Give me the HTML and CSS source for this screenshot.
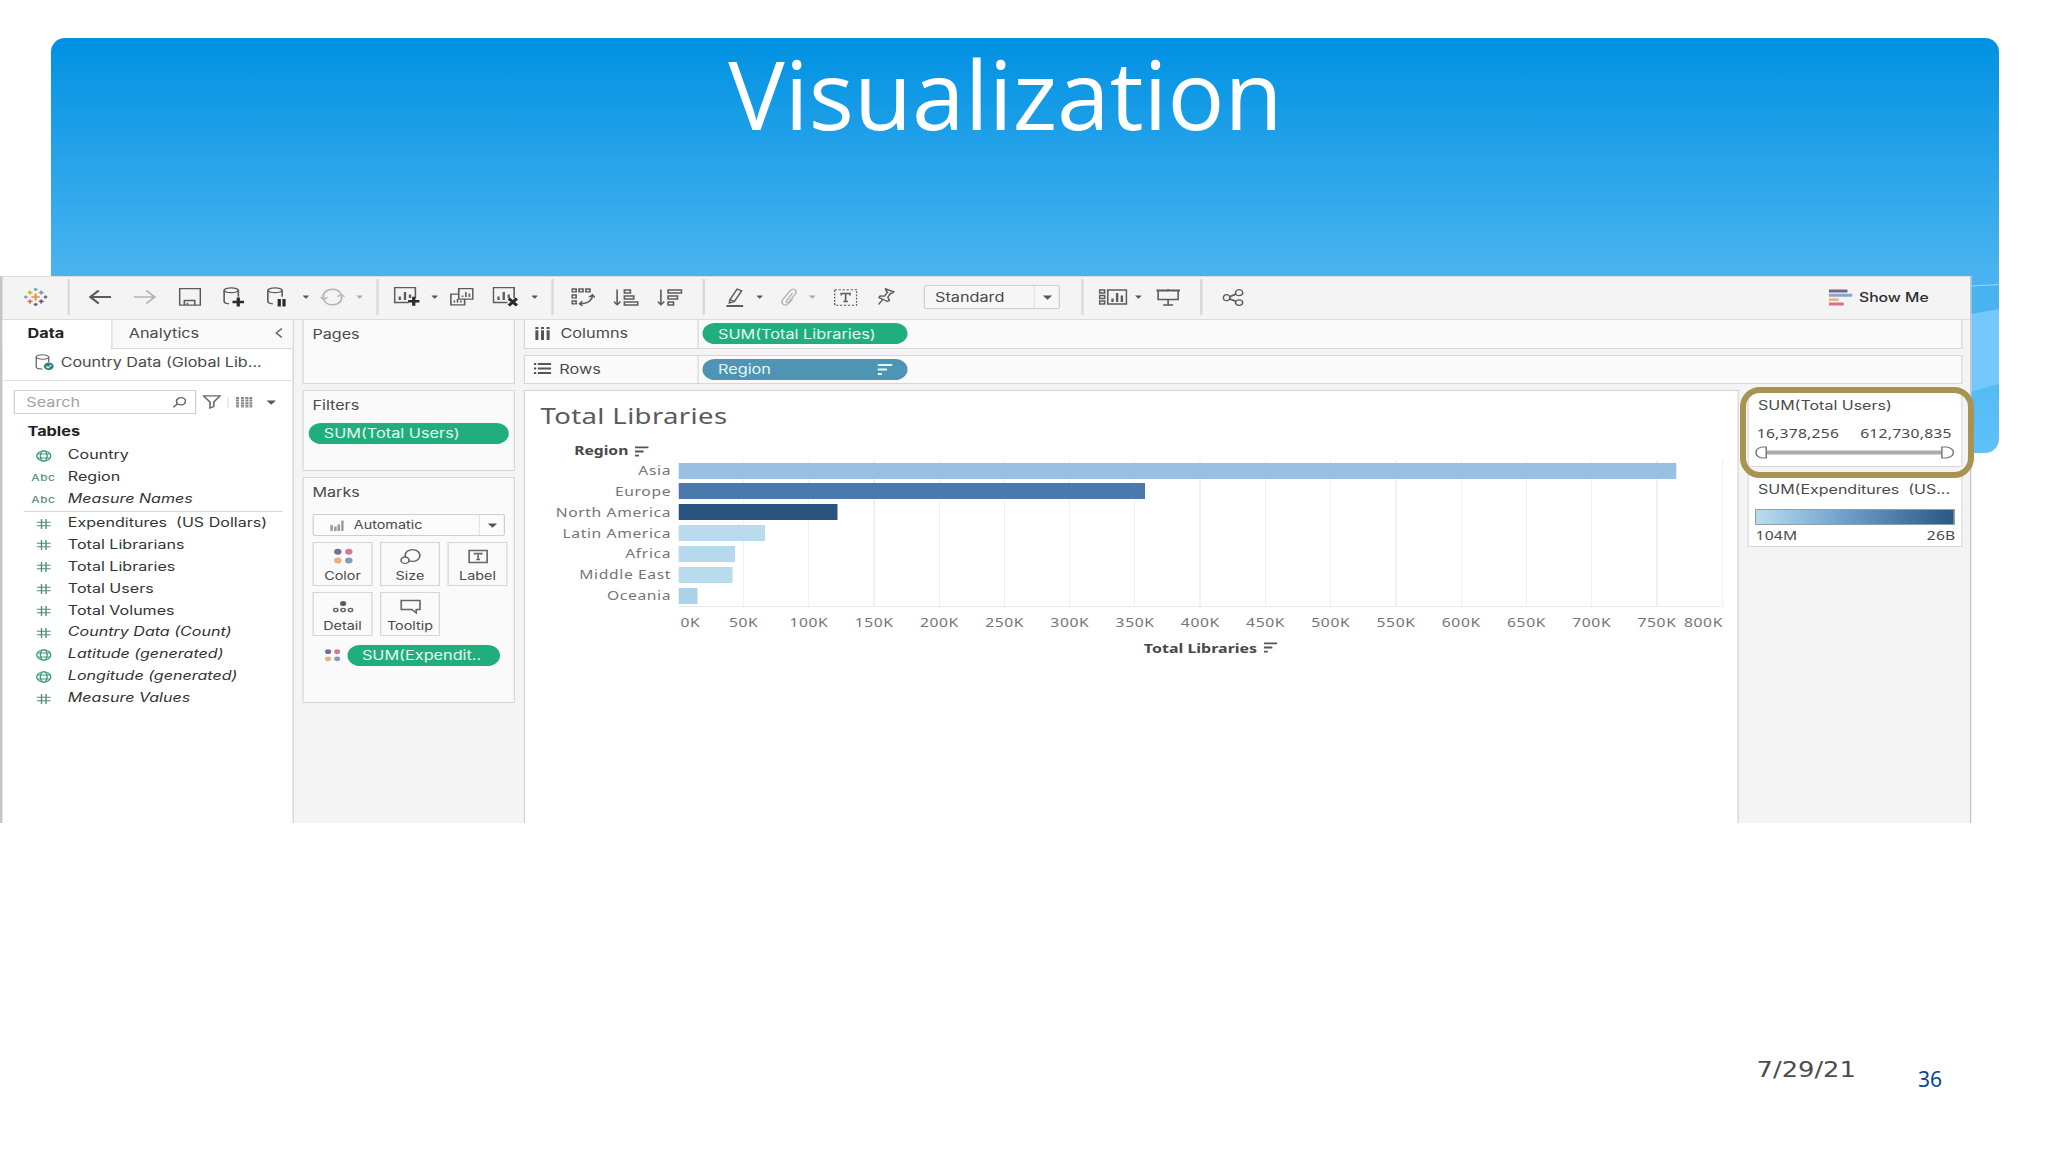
FILE: index.html
```html
<!DOCTYPE html>
<html lang="en">
<head>
    <meta charset="UTF-8">
    <meta name="viewport" content="width=device-width, initial-scale=1.0">
    <title>Visualization</title>
    <link rel="stylesheet" href="styles.css">
</head>
<body>
    <svg class="sprite" width="0" height="0">
        <symbol id="globe" viewBox="0 0 13 12">
            <g fill="none" stroke="#3f9a7c" stroke-width="1.1">
                <ellipse cx="6.5" cy="6" rx="5.6" ry="5.2"/>
                <ellipse cx="6.5" cy="6" rx="2.7" ry="5.2"/>
                <path d="M1.4 4h10.2M1.4 8h10.2"/>
            </g>
        </symbol>
        <symbol id="hash" viewBox="0 0 13 12">
            <path d="M4.7 1v10M8.3 1v10M1 4.2h11M1 7.8h11" fill="none" stroke="#4f8d78" stroke-width="1.1"/>
        </symbol>
        <symbol id="caret" viewBox="0 0 6 4">
            <path d="M0 0.4h6L3 3.8z" fill="currentColor"/>
        </symbol>
        <symbol id="sort" viewBox="0 0 12 11">
            <path d="M0 1h12M0 5.5h7.5M0 10h3.5" fill="none" stroke="currentColor" stroke-width="2"/>
        </symbol>
        <symbol id="dots" viewBox="0 0 16 16">
            <circle cx="4" cy="3.6" r="2.8" fill="#756f98"/>
            <circle cx="12.3" cy="3.6" r="2.8" fill="#d9779a"/>
            <circle cx="4" cy="11.8" r="2.8" fill="#eeac78"/>
            <circle cx="12.3" cy="11.8" r="2.8" fill="#7f9fb8"/>
        </symbol>
    </svg>

    <div class="slide">
        <div class="banner">
            <svg class="waves" viewBox="0 0 28 190" preserveAspectRatio="none">
                <path d="M0 40L28 35V110L0 118z" fill="#74c8fa"/>
                <path d="M0 12L28 10.5" stroke="#9ad8fb" stroke-width="1"/>
            </svg>
        </div>

        <h1>Visualization</h1>

        <!-- Tableau window -->
        <div class="app">
            <div class="toolbar">
                <div class="group logo">
                    <svg width="19" height="18" viewBox="0 0 19 18" fill="none" stroke-width="1.4">
                        <path d="M9.5 5.5v7M6.2 9h6.6" stroke="#e8923c" stroke-width="1.7"/>
                        <path d="M5 2.6v4M3 4.6h4" stroke="#d9a63c"/>
                        <path d="M14 2.6v4M12 4.6h4" stroke="#6f94a8"/>
                        <path d="M5 11.4v4M3 13.4h4" stroke="#d3695a"/>
                        <path d="M14 11.4v4M12 13.4h4" stroke="#4d5586"/>
                        <path d="M9.5 0v3M8 1.5h3M1.6 7.6v3M0.2 9h3" stroke="#7fa3ae"/>
                        <path d="M17.4 7.6v3M16 9h3M9.5 15v3M8 16.5h3" stroke="#5b6290"/>
                    </svg>
                </div>
                <div class="group nav">
                    <span class="tool"><svg width="18" height="16" viewBox="0 0 18 16"><path d="M18 8H1.5M8 1.5L1.2 8L8 14.5" stroke-width="1.9"/></svg></span>
                    <span class="tool off fwd"><svg width="18" height="16" viewBox="0 0 18 16"><path d="M0 8h16.5M10 1.5L16.8 8L10 14.5" stroke-width="1.7"/></svg></span>
                    <span class="tool"><svg width="18" height="18" viewBox="0 0 18 18"><path d="M0.7 0.7h16.6v16.4H0.7zM4.5 17v-4.5h8.3V17M7 17v-2.3"/></svg></span>
                    <span class="tool"><svg width="18" height="20" viewBox="0 0 18 20"><ellipse cx="7" cy="3.3" rx="5.7" ry="2.4"/><path d="M1.3 3.3v11.2c0 1.2 1.6 2 4 2.4M12.7 3.3v6.5"/><path d="M12.6 10.5v9M8 15h9.2" class="heavy"/></svg></span>
                    <span class="tool"><svg width="18" height="20" viewBox="0 0 18 20"><ellipse cx="7" cy="3.3" rx="5.7" ry="2.4"/><path d="M1.3 3.3v11.2c0 1.2 1.6 2 4 2.4M12.7 3.3v6.5"/><path d="M10.4 12v7.5M14.2 12v7.5" class="heavy"/></svg></span>
                    <svg class="caret"><use href="#caret"/></svg>
                    <span class="tool off refresh"><svg width="20" height="18" viewBox="0 0 20 18"><path d="M3 10.5C1.5 5.5 5 1.2 10 1.2c3.2 0 5.5 1.8 6.7 4.3M17 7.5c1.5 5-2 9.3-7 9.3-3.2 0-5.5-1.8-6.7-4.3" stroke-width="1.4"/><path d="M0.5 9l2.6 2.8L6 9.2M14 8.7l3-2.6 2.6 2.8" stroke-width="1.2"/></svg></span>
                    <svg class="caret off"><use href="#caret"/></svg>
                </div>
                <div class="group sheets">
                    <span class="tool"><svg width="21" height="20" viewBox="0 0 21 20"><path d="M12 15.5H0.7V0.7h16.6v10.5"/><path d="M4.8 13V9.5M9 13V5M13 11V7.5" stroke-width="1.9"/><path d="M16 9.8v9M11.5 14.2h9" class="heavy"/></svg></span>
                    <svg class="caret"><use href="#caret"/></svg>
                    <span class="tool"><svg width="19" height="18" viewBox="0 0 19 18"><path d="M7 0.7h11.3v10.5H7zM7 6.2H0.7v10.6h11v-5.6"/><path d="M10 9V7.5M12.7 9V4M15.5 9V5.5M3.5 14.5V12.5M6 14.5V11M8.7 14.5V12.5"/></svg></span>
                    <span class="tool"><svg width="21" height="20" viewBox="0 0 21 20"><path d="M12 15.5H0.7V0.7h16.6v10.5"/><path d="M4.8 13V9.5M9 13V5M13 11V7.5" stroke-width="1.9"/><path d="M13 11.5l6.5 7M19.5 11.5l-6.5 7" class="heavy"/></svg></span>
                    <svg class="caret"><use href="#caret"/></svg>
                </div>
                <div class="group sorts">
                    <span class="tool"><svg width="19" height="18" viewBox="0 0 19 18"><path d="M0.7 1h3.2v2.8H0.7zM6.2 1h3.2v2.8H6.2zM11.7 1h3.2v2.8h-3.2zM0.7 7h3.2v2.8H0.7zM0.7 13h3.2v2.8H0.7z"/><path d="M17 7c0 5-3.5 8.5-10 8.8M14.3 9.3L17 6.7l2 2.8M9 13.3l-2.5 2.5L9 18"/></svg></span>
                    <span class="tool"><svg width="20" height="17" viewBox="0 0 20 17"><path d="M2.7 0.5V15M0 12.5l2.7 3.3 2.7-3.3"/><path d="M8.5 1h4.8v3H8.5zM8.5 7h7.5v3H8.5zM8.5 13h10.8v3H8.5z"/></svg></span>
                    <span class="tool"><svg width="20" height="17" viewBox="0 0 20 17"><path d="M2.7 0.5V15M0 12.5l2.7 3.3 2.7-3.3"/><path d="M8.5 1h10.8v3H8.5zM8.5 7h7.5v3H8.5zM8.5 13h4.3v3H8.5z"/></svg></span>
                </div>
                <div class="group format">
                    <span class="tool"><svg width="14" height="19" viewBox="0 0 14 19"><path d="M3 11.5L8.7 1l3.6 1.8L6.5 13.5 2.5 15zM3 11.5l3.5 2"/><path d="M0 18h13.5" stroke-width="2"/></svg></span>
                    <svg class="caret"><use href="#caret"/></svg>
                    <span class="tool off"><svg width="14" height="18" viewBox="0 0 14 18"><path d="M10 5L5.3 12.8c-1 1.8 1 2.7 2 1L12.5 5.5C14 2 10.5-0.5 8 2.8L2 12c-2 4 2.5 7 5 3.5l3-4.5" stroke-width="1.2"/></svg></span>
                    <svg class="caret off"><use href="#caret"/></svg>
                    <span class="tool gap"><svg width="19" height="17" viewBox="0 0 19 17"><path d="M0.7 0.7h17.6v15.6H0.7z" stroke-dasharray="1.8 1.4" stroke-width="1.1"/><path d="M6 6.5V4.5h7v2M9.5 4.5v8M7.7 12.5h3.6"/></svg></span>
                    <span class="tool"><svg width="14" height="18" viewBox="0 0 14 18"><path d="M6.5 0.8l6.5 3-1.3 1.5-1.2-0.2-2.2 4.2 1.2 3.2-1.5 1L1.2 9.5l1-1.5 3.5 0.2L8 4 7 3zM4.2 11.5L0.8 16.5"/></svg></span>
                    <div class="select fit"><span>Standard</span><i><svg class="caret"><use href="#caret"/></svg></i></div>
                </div>
                <div class="group views">
                    <span class="tool"><svg width="23" height="16" viewBox="0 0 23 16"><path d="M0.7 1h4v3h-4zM0.7 6.5h4v3h-4zM0.7 12h4v3h-4zM7.2 1h15v14h-15z"/><path d="M11 13V9.5M14.7 13V4M18.5 13V6.5" stroke-width="1.9"/></svg></span>
                    <svg class="caret"><use href="#caret"/></svg>
                    <span class="tool"><svg width="19" height="17" viewBox="0 0 19 17"><path d="M0 1.5h19" stroke-width="2"/><path d="M1.5 2v8.5h16V2M9.5 10.5V16M5.5 16h8M9.5 0v1"/></svg></span>
                </div>
                <div class="group share">
                    <span class="tool"><svg width="17" height="17" viewBox="0 0 17 17"><ellipse cx="3.3" cy="8.7" rx="2.7" ry="3"/><ellipse cx="13.3" cy="3.7" rx="2.9" ry="3"/><ellipse cx="13.3" cy="13.6" rx="2.9" ry="2.8"/><path d="M6 7.5l4.6-2.3M6 10l4.6 2.3" stroke-width="1.6"/></svg></span>
                </div>
                <div class="show-me">
                    <svg width="19" height="17" viewBox="0 0 19 17">
                        <path d="M0 2h15" stroke="#6f6685" stroke-width="3"/>
                        <path d="M0 6.2h19" stroke="#86a5cd" stroke-width="3"/>
                        <path d="M0 10.6h8" stroke="#eeb48c" stroke-width="2.8"/>
                        <path d="M0 15h12" stroke="#dc7385" stroke-width="3"/>
                    </svg>
                    <span>Show Me</span>
                </div>
            </div>

            <div class="workspace">
                <!-- Data pane -->
                <div class="data-pane">
                    <div class="tabs">
                        <div class="tab active">Data</div>
                        <div class="tab"><span>Analytics</span><svg width="6" height="10" viewBox="0 0 6 10"><path d="M5.5 0.5L1 5l4.5 4.5"/></svg></div>
                    </div>
                    <div class="source">
                        <svg width="16" height="17" viewBox="0 0 16 17"><g fill="none" stroke="#6d6d6d" stroke-width="1.1"><ellipse cx="6" cy="3" rx="5" ry="2.2"/><path d="M1 3v10c0 1.2 2 2 5 2M11 3v5"/></g><circle cx="11" cy="12.3" r="3.9" fill="#2f8284"/><path d="M9 12.3l1.5 1.5 2.6-2.8" stroke="#fff" fill="none"/></svg>
                        <span>Country Data (Global Lib...</span>
                    </div>
                    <div class="search-row">
                        <div class="search"><span>Search</span><svg width="11" height="11" viewBox="0 0 11 11"><circle cx="6.8" cy="4.3" r="3.6"/><path d="M4.2 6.8L0.5 10.3"/></svg></div>
                        <svg class="funnel" width="15" height="14" viewBox="0 0 15 14"><path d="M0.8 0.8h13.2L9 7v4.5L6 13V7z"/></svg>
                        <svg class="grid" width="14" height="11" viewBox="0 0 14 11"><path d="M2 0v11M6 0v11M9.5 0v11M12.8 0v11" stroke-dasharray="2 0.6"/></svg>
                        <svg class="caret big"><use href="#caret"/></svg>
                    </div>
                    <div class="tables-title">Tables</div>
                    <ul class="fields">
                        <li><svg><use href="#globe"/></svg>Country</li>
                        <li><b>Abc</b>Region</li>
                        <li class="calc"><b>Abc</b>Measure Names</li>
                    </ul>
                    <ul class="fields measures">
                        <li><svg><use href="#hash"/></svg>Expenditures  (US Dollars)</li>
                        <li><svg><use href="#hash"/></svg>Total Librarians</li>
                        <li><svg><use href="#hash"/></svg>Total Libraries</li>
                        <li><svg><use href="#hash"/></svg>Total Users</li>
                        <li><svg><use href="#hash"/></svg>Total Volumes</li>
                        <li class="calc"><svg><use href="#hash"/></svg>Country Data (Count)</li>
                        <li class="calc"><svg><use href="#globe"/></svg>Latitude (generated)</li>
                        <li class="calc"><svg><use href="#globe"/></svg>Longitude (generated)</li>
                        <li class="calc"><svg><use href="#hash"/></svg>Measure Values</li>
                    </ul>
                </div>

                <!-- Pages / Filters / Marks -->
                <div class="cards">
                    <div class="card pages"><h3>Pages</h3></div>
                    <div class="card filters">
                        <h3>Filters</h3>
                        <div class="pill green">SUM(Total Users)</div>
                    </div>
                    <div class="card marks">
                        <h3>Marks</h3>
                        <div class="select mark-type">
                            <svg width="11" height="11" viewBox="0 0 11 11"><path d="M1.3 11V5M4.3 11V6.5M7 11V4.5M10 11V0.5" stroke="#999" stroke-width="2"/></svg>
                            <span>Automatic</span><i><svg class="caret big"><use href="#caret"/></svg></i>
                        </div>
                        <div class="mark-grid">
                            <div class="mark"><svg class="plain" width="17" height="17"><use href="#dots"/></svg>Color</div>
                            <div class="mark"><svg width="17" height="17" viewBox="0 0 17 17"><circle cx="10" cy="7.5" r="5.9"/><circle cx="4" cy="12.2" r="3.2" fill="#fafafa"/></svg>Size</div>
                            <div class="mark"><svg width="17" height="17" viewBox="0 0 17 17"><path d="M1.3 2.5h14.4v12H1.3zM5.7 6.7V5.5h5.6v1.2M8.5 5.5V11.5M7 11.5h3"/></svg>Label</div>
                            <div class="mark"><svg width="17" height="17" viewBox="0 0 17 17"><circle cx="8.5" cy="5.5" r="1.9" fill="#555"/><circle cx="2.6" cy="12" r="1.7"/><circle cx="8.5" cy="12" r="1.7"/><circle cx="14.4" cy="12" r="1.7"/></svg>Detail</div>
                            <div class="mark"><svg width="17" height="17" viewBox="0 0 17 17"><path d="M1 2.5h15v9h-3V15L9.5 11.5H1z"/></svg>Tooltip</div>
                        </div>
                        <div class="encoding">
                            <svg width="14" height="15"><use href="#dots"/></svg>
                            <div class="pill green">SUM(Expendit..</div>
                        </div>
                    </div>
                </div>

                <div class="main">
                    <div class="shelf">
                        <div class="shelf-name">
                            <svg width="12" height="13" viewBox="0 0 12 13"><path d="M1.5 0v2M6 0v2M10.5 0v2M1.5 3.2V13M6 3.2V13M10.5 3.2V13" stroke-width="2.4"/></svg>
                            Columns
                        </div>
                        <div class="pill green">SUM(Total Libraries)</div>
                    </div>
                    <div class="shelf">
                        <div class="shelf-name rows">
                            <svg width="14" height="11" viewBox="0 0 14 11"><path d="M0 1h2M3.3 1H14M0 5.5h2M3.3 5.5H14M0 10h2M3.3 10H14" stroke-width="1.9"/></svg>
                            Rows
                        </div>
                        <div class="pill blue">Region<svg width="12" height="11"><use href="#sort"/></svg></div>
                    </div>

                    <div class="view-row">
                        <div class="view">
                            <h2>Total Libraries</h2>
                            <div class="row-header">Region <svg width="11" height="11"><use href="#sort"/></svg></div>
                            <div class="chart">
                                <div class="row-labels">
                                    <span>Asia</span>
                                    <span>Europe</span>
                                    <span>North America</span>
                                    <span>Latin America</span>
                                    <span>Africa</span>
                                    <span>Middle East</span>
                                    <span>Oceania</span>
                                </div>
                                <div class="plot">
                                    <div class="bar" style="width: 95.5%; background: #97c0e3"></div>
                                    <div class="bar" style="width: 44.6%; background: #4a7aab"></div>
                                    <div class="bar" style="width: 15.2%; background: #29547f"></div>
                                    <div class="bar" style="width: 8.3%; background: #b9dbed"></div>
                                    <div class="bar" style="width: 5.35%; background: #b6d9ee"></div>
                                    <div class="bar" style="width: 5.1%; background: #b9dced"></div>
                                    <div class="bar" style="width: 1.75%; background: #acd2e8"></div>
                                </div>
                            </div>
                            <div class="axis">
                                <span>0K</span><span>50K</span><span>100K</span><span>150K</span><span>200K</span><span>250K</span><span>300K</span><span>350K</span><span>400K</span><span>450K</span><span>500K</span><span>550K</span><span>600K</span><span>650K</span><span>700K</span><span>750K</span><span>800K</span>
                            </div>
                            <div class="axis-title">Total Libraries <svg width="11" height="11"><use href="#sort"/></svg></div>
                        </div>

                        <div class="legends">
                            <div class="legend range">
                                <h4>SUM(Total Users)</h4>
                                <div class="ends"><span>16,378,256</span><span>612,730,835</span></div>
                                <svg width="160" height="13" viewBox="0 0 160 13"><path d="M9 6.5h140" stroke="#ababab" stroke-width="4"/><path d="M9 1v11H5.5C2 11 0.8 8.5 0.8 6.5S2 2 5.5 1zM149.500 1v11h4c3.5-1 5.2-3.5 5.2-5.5s-1.7-4.5-5.2-5.5z" fill="#fff" stroke="#777" stroke-width="1.2"/></svg>
                            </div>
                            <div class="legend ramp">
                                <h4>SUM(Expenditures  (US...</h4>
                                <div class="gradient"></div>
                                <div class="ends"><span>104M</span><span>26B</span></div>
                            </div>
                        </div>
                    </div>
                </div>
            </div>
        </div>

        <div class="highlight"></div>

        <div class="footer">
            <span class="date">7/29/21</span>
            <span class="page">36</span>
        </div>
    </div>
</body>
</html>
```
FILE: styles.css
```css
* {
    box-sizing: border-box;
}

body {
    margin: 0;
    background: #fff;
    font-family: Inter, "Noto Sans", sans-serif;
}

.sprite {
    position: absolute;
}

.slide {
    position: relative;
    width: 2048px;
    height: 1152px;
    overflow: hidden;
}

/* blue header shape behind everything */
.banner {
    position: absolute;
    left: 51px;
    top: 38px;
    width: 1948px;
    height: 415px;
    border-radius: 14px;
    background: linear-gradient(#0091e2 0%, #4ab4f0 57%, #49b3f1 66%, #5fc2f9 100%);
    overflow: hidden;
}

.waves {
    position: absolute;
    right: 0;
    top: 236px;
    width: 28px;
    height: 190px;
}

h1 {
    position: relative;
    margin: 0;
    height: 276px;
    padding: 30px 37px 0 0;
    font: 400 94.8px/128px "Open Sans", sans-serif;
    color: #fff;
    text-align: center;
}

/* the window is stretched sideways to fill the slide */
.app {
    position: relative;
    width: 1577px;
    height: 547px;
    transform: scaleX(1.25);
    transform-origin: 0 0;
    background: #f4f4f4;
    border: solid #c6c6c6;
    border-width: 1px 1px 0 2px;
    border-top-color: #dcdcdc;
    color: #4a4a4a;
    overflow: hidden;
    font-size: 13px;
}

.app svg {
    flex: none;
}

/* Toolbar */
.toolbar {
    display: flex;
    height: 42px;
    padding: 2px 33px 4px 0;
}

.group {
    display: flex;
    align-items: center;
    border-right: 2px solid #dadada;
}

.logo {
    width: 54px;
    padding-left: 16.5px;
}

.nav {
    width: 246.5px;
    padding-left: 6px;
}

.sheets {
    width: 140px;
    padding-left: 5px;
}

.sorts {
    width: 121.5px;
    padding-left: 6px;
}

.format {
    width: 302.5px;
    padding-left: 7.5px;
}

.views {
    width: 95px;
    padding-left: 6px;
}

.share {
    border: 0;
    padding-left: 7px;
}

.tool {
    width: 35.2px;
    display: flex;
    justify-content: center;
}

.tool.fwd {
    width: 37px;
}

.tool.refresh {
    width: 33.4px;
}

.format .tool {
    width: 33px;
}

.format .gap {
    margin-left: 3px;
}

.tool svg {
    fill: none;
    stroke: #5c5c5c;
    stroke-width: 1.3;
}

.tool.off svg {
    stroke: #b3b3b3;
}

.tool .heavy {
    stroke: #2b2b2b;
    stroke-width: 2.6;
}

.caret {
    width: 5.5px;
    height: 4px;
    margin: 0 2px;
    color: #555;
}

.format > .caret,
.views > .caret {
    margin: 0 4px 0 0;
}

.caret.off {
    color: #aaa;
}

.caret.big {
    width: 8px;
    height: 5px;
    margin: 0;
}

.select {
    display: flex;
    align-items: center;
    background: #fbfbfb;
    border: 1px solid #cfcfcf;
    border-radius: 2px;
}

.select span {
    flex: 1;
}

.select i {
    align-self: stretch;
    display: flex;
    align-items: center;
    justify-content: center;
    width: 20px;
    border-left: 1px solid #e4e4e4;
}

.fit {
    width: 109px;
    height: 24px;
    margin-left: 13.5px;
    padding-left: 8px;
    background: #f7f7f7;
}

.fit .caret {
    width: 8px;
    height: 5px;
    margin: 0;
}

.show-me {
    margin-left: auto;
    display: flex;
    align-items: center;
    gap: 5px;
    color: #2e2e2e;
    font-size: 12.6px;
    font-weight: 500;
}

/* Columns of the workspace */
.workspace {
    display: grid;
    grid-template-columns: 233px 170.4px 1fr;
    column-gap: 7px;
    height: 504px;
    padding-right: 8px;
    border-top: 1px solid #dcdcdc;
}

.data-pane {
    background: #fff;
    border-right: 1px solid #cfcfcf;
}

.tabs {
    display: flex;
    height: 29px;
}

.tab {
    display: flex;
    align-items: center;
    justify-content: space-between;
    flex: 1;
    padding: 0 8px 3px 13px;
    background: #f9f9f9;
    border: solid #d9d9d9;
    border-width: 0 0 1px 1px;
}

.tab.active {
    flex: none;
    width: 87px;
    padding-left: 20px;
    background: #fff;
    border: 0;
    color: #222;
    font-weight: 700;
}

.tab svg,
.funnel,
.grid,
.search svg,
.mark svg {
    fill: none;
    stroke: #666;
    stroke-width: 1.3;
}

.source {
    display: flex;
    align-items: center;
    gap: 5px;
    height: 32px;
    padding: 0 0 4px 25.5px;
    border-bottom: 1px solid #e2e2e2;
    font-size: 12.9px;
    white-space: nowrap;
}

.search-row {
    display: flex;
    align-items: center;
    padding: 9px 0 0 9px;
}

.search {
    display: flex;
    align-items: center;
    justify-content: space-between;
    width: 146px;
    height: 24px;
    padding: 0 7px 0 9px;
    border: 1px solid #d0d0d0;
    color: #a3a3a3;
}

.funnel {
    margin-left: 5px;
}

.grid {
    box-sizing: content-box;
    margin: 0 11px 0 5px;
    padding-left: 5px;
    border-left: 1px solid #e0e0e0;
}

.grid path {
    stroke: #888;
    stroke-width: 2.5;
}

.tables-title {
    padding: 9px 0 0 20px;
    height: 30px;
    color: #222;
    font-weight: 700;
}

.fields {
    list-style: none;
    margin: 0;
    padding: 0;
    color: #333;
    font-size: 12.85px;
}

.fields li {
    display: flex;
    align-items: center;
    height: 21.88px;
    padding-left: 23px;
    white-space: pre;
}

.fields svg {
    width: 16px;
    height: 12px;
    margin: 2px 11.5px 0 1.8px;
}

.fields b {
    width: 29.3px;
    padding-top: 1px;
    color: #5e8f80;
    font-size: 9.5px;
    font-style: normal;
    font-weight: 500;
    letter-spacing: 0.4px;
}

.fields .calc {
    font-style: italic;
}

.measures {
    padding-top: 2px;
}

.measures::before {
    content: "";
    display: block;
    height: 1px;
    margin: -1px 8px 0 17px;
    background: #d6d6d6;
}

/* Cards */
.card {
    margin-bottom: 6px;
    padding: 0 6px;
    background: #fafafa;
    border: 1px solid #d8d8d8;
}

.card h3 {
    margin: 0;
    padding-left: 1px;
    font-size: 12.9px;
    font-weight: 400;
    line-height: 16px;
}

.pages {
    height: 64px;
    padding-top: 7px;
    border-top: 0;
}

.filters {
    height: 81px;
    padding: 7px 4px;
}

.filters h3 {
    padding-left: 3px;
}

.marks {
    height: 226px;
    padding-top: 7px;
}

.pill {
    height: 21px;
    padding: 0 12px;
    border-radius: 10px / 10.5px;
    line-height: 20px;
    color: #e8f7f0;
    white-space: nowrap;
}

.green {
    background: #20ae7d;
}

.blue {
    background: #4d94b5;
}

.filters .pill {
    margin-top: 9px;
}

.mark-type {
    height: 22px;
    margin: 13px 1px 6px 1px;
    padding-left: 13px;
    gap: 8px;
    font-size: 11.5px;
}

.mark-grid {
    display: grid;
    grid-template-columns: 48px 48px 48px;
    gap: 6px;
    justify-content: space-between;
    margin: 0 1.5px 9px 1px;
}

.mark {
    display: flex;
    flex-direction: column;
    align-items: center;
    height: 44px;
    padding-top: 5px;
    border: 1px solid #d6d6d6;
    font-size: 11.5px;
    line-height: 18px;
}

.mark svg {
    margin-bottom: 2px;
}

.mark .plain {
    stroke: none;
}

.encoding {
    display: flex;
    align-items: center;
    gap: 5px;
    padding: 0 5px 0 9.5px;
}

.encoding .pill {
    flex: 1;
}

/* Shelves and view */
.main {
    display: flex;
    flex-direction: column;
}

.shelf {
    display: flex;
    align-items: center;
    height: 29px;
    margin-bottom: 6px;
    padding-bottom: 1px;
    background: #fafafa;
    border: 1px solid #d8d8d8;
}

.shelf:first-child {
    border-top: 0;
}

.shelf-name {
    display: flex;
    align-items: center;
    gap: 8px;
    width: 139px;
    align-self: stretch;
    margin-bottom: -1px;
    padding: 0 0 2px 8px;
    border-right: 1px solid #d8d8d8;
}

.shelf-name.rows {
    gap: 6px;
    padding-left: 7px;
}

.shelf-name svg {
    stroke: #555;
}

.shelf .pill {
    display: flex;
    align-items: center;
    justify-content: space-between;
    width: 164px;
    margin-left: 3px;
}

.view-row {
    flex: 1;
    display: flex;
    gap: 7px;
}

.view {
    width: 972px;
    background: #fff;
    border: 1px solid #d4d4d4;
    border-bottom: 0;
    color: #757575;
    font-family: "Noto Sans", sans-serif;
}

.view h2 {
    margin: 0;
    padding: 8px 0 0 12px;
    font-size: 22px;
    font-weight: 400;
    line-height: 32px;
    letter-spacing: 0.3px;
    color: #5a5a5a;
}

.row-header,
.axis-title {
    display: flex;
    align-items: center;
    gap: 5px;
    font-size: 12.5px;
    font-weight: 700;
    line-height: 18px;
    color: #484848;
}

.row-header {
    padding: 11px 0 0 39px;
}

.row-header svg,
.axis-title svg {
    color: #555;
}

.chart {
    display: flex;
}

.row-labels {
    width: 122.5px;
    padding: 2px 6px 0 0;
    text-align: right;
    font-size: 12.5px;
    letter-spacing: 0.5px;
}

.row-labels span {
    display: block;
    height: 20.85px;
    line-height: 18px;
}

.plot {
    width: 836px;
    height: 147px;
    padding-top: 2.5px;
    border-bottom: 1px solid #ebebeb;
    background: repeating-linear-gradient(90deg, transparent 0, transparent 51.2px, #f0f0f0 51.2px, #f0f0f0 52.2px);
}

.bar {
    height: 16px;
    margin-bottom: 4.85px;
}

.axis {
    display: flex;
    margin-left: 96.3px;
    font-size: 12.5px;
    letter-spacing: 0.5px;
    line-height: 18px;
    padding-top: 6px;
}

.axis span {
    width: 52.2px;
    text-align: center;
}

/* the outer labels stay inside the plot */
.axis span:first-child {
    padding-left: 19px;
}

.axis span:last-child {
    margin-left: -15px;
}

.axis-title {
    justify-content: center;
    padding: 7px 0 0 126px;
    font-size: 12.8px;
}

.legends {
    flex: 1;
}

.legend {
    background: #fff;
    border: 1px solid #d8d8d8;
    padding: 0 5px;
}

.legend h4 {
    margin: 0;
    padding-left: 2px;
    font-size: 12.8px;
    font-weight: 400;
    line-height: 18px;
    white-space: pre;
}

.range {
    height: 77px;
    margin-bottom: 7px;
    padding-top: 6px;
}

.ramp {
    height: 73px;
    padding-top: 6px;
}

.ends {
    display: flex;
    justify-content: space-between;
    font-family: "Noto Sans", sans-serif;
    font-size: 12.5px;
    letter-spacing: 0.2px;
    line-height: 18px;
}

.range .ends {
    padding: 10px 3px 0 1px;
}

.range > svg {
    display: block;
    margin-top: 3px;
}

.gradient {
    height: 16px;
    margin: 10px 0 2px;
    border: 1px solid #8fa3ad;
    background: linear-gradient(90deg, #b9ddf1, #6a9bc9 48%, #2a5783);
}

.highlight {
    position: absolute;
    left: 1740px;
    top: 387px;
    width: 234px;
    height: 91px;
    border: 6px solid #a99353;
    border-radius: 20px;
}

.footer {
    position: relative;
    display: flex;
    justify-content: flex-end;
    padding: 231px 106px 0 0;
}

.date {
    margin-right: 62.5px;
    font: 22px/32px "DejaVu Sans", sans-serif;
    color: #4c4c4c;
    transform: scaleX(1.17);
    transform-origin: 100% 50%;
}

.page {
    padding-top: 9px;
    font: 21px/32px "Noto Sans", sans-serif;
    color: #0a4590;
}
```
